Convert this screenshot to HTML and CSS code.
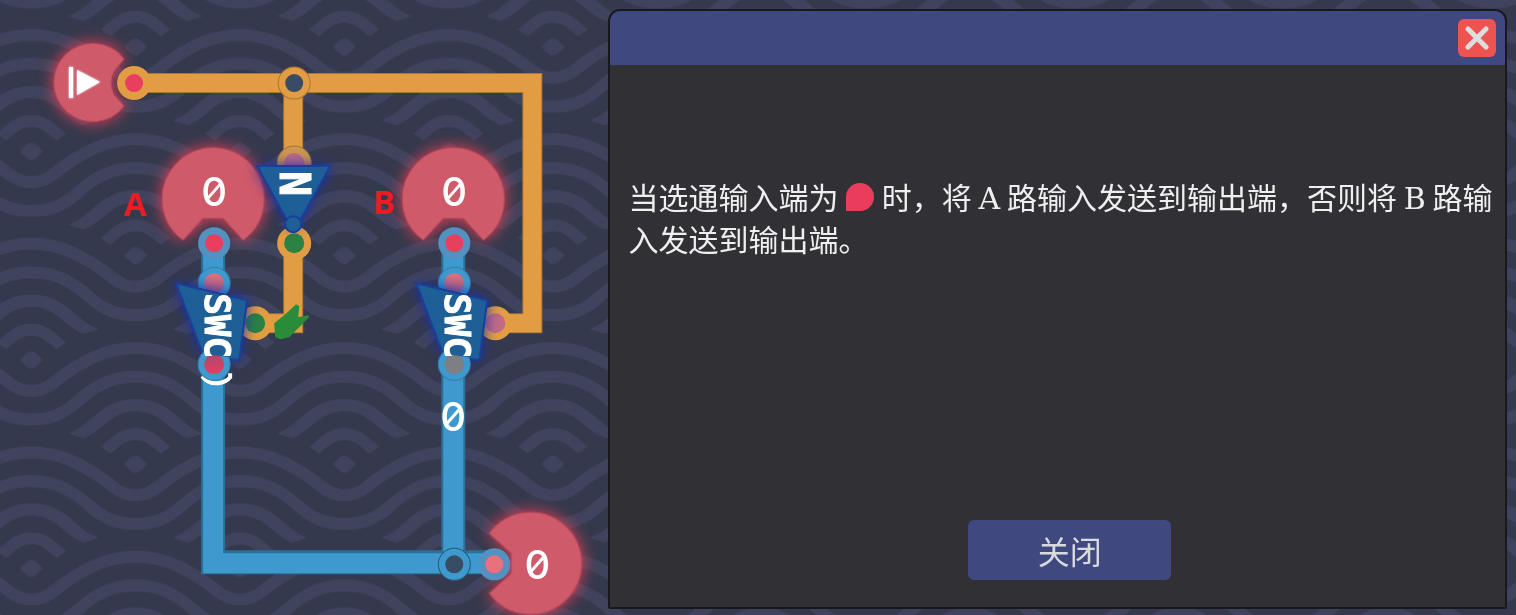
FILE: index.html
```html
<!DOCTYPE html>
<html lang="zh-CN">
<head>
<meta charset="utf-8">
<title>选通电路</title>
<link rel="stylesheet" href="styles.css">
</head>
<body>
<svg class="backdrop" aria-hidden="true">
  <defs>
    <g id="wave">
      <path class="wave-fill" d="M-34 0Q-12 -26 0 -26T34 0Q12 26 0 26T-34 0Z"/>
      <path class="wave-fill" d="M-105 -53C-70 -80 -50 -109 0 -109S70 -80 105 -53L76 -32C50 -52 35 -73 0 -73S-50 -52 -76 -32Z"/>
      <path class="wave-fill" d="M-202 -93C-135 -113 -105 -196 0 -196S135 -113 202 -93L158 -78C100 -98 75 -160 0 -160S-100 -98 -158 -78Z"/>
      <path class="wave-line" d="M-314 -134C-255 -134 -215 -152 -175 -188C-125 -233 -75 -263 0 -263S125 -233 175 -188C215 -152 255 -134 314 -134"/>
      <path class="wave-line" d="M-314 -220C-275 -220 -250 -240 -222 -264C-160 -308 -90 -349 0 -349S160 -308 222 -264C250 -240 275 -220 314 -220"/>
    </g>
    <pattern id="waves" width="626" height="626" patternUnits="userSpaceOnUse" patternTransform="scale(.3333) translate(94 -259)">
      <use href="#wave" x="313" y="400"/>
      <use href="#wave" x="0" y="87"/>
      <use href="#wave" x="626" y="87"/>
      <use href="#wave" x="0" y="713"/>
      <use href="#wave" x="626" y="713"/>
    </pattern>
  </defs>
  <rect width="100%" height="100%" fill="url(#waves)"/>
</svg>
<main class="page">
  <section class="board">
    <svg class="circuit" viewBox="0 0 606 615" role="img" aria-label="电路图">
      <defs>
        <g id="zero"><text class="digit" text-anchor="middle" y="15">0</text><path class="slash" d="M-7 8L7 -8"/></g>
        <path id="terminal" class="node" d="M-30 42A51 51 0 1 1 30 42L10 20H-10Z"/>
        <path id="gate" class="gate" d="M176 283L247 300L239 360L203 355Z"/>
        <linearGradient id="fade" x1="0" x2="0" y1="0" y2="1"><stop offset="0" stop-color="#e2737c"/><stop offset="1" stop-color="#9c5c86"/></linearGradient>
        <linearGradient id="fade-up" x1="0" x2="0" y1="1" y2="0"><stop offset="0" stop-color="#e93e5d"/><stop offset="1" stop-color="#a9486f"/></linearGradient>
      </defs>

      <path class="wire-edge" d="M134 83H532V323H495M293 83V163M293 243V323H255"/>
      <path class="wire" d="M134 83H532V323H495M293 83V163M293 243V323H255"/>
      <path class="bus-edge" d="M213 243V562H494M453 243V562"/>
      <path class="bus" d="M213 243V563H494M453 243V563"/>

      <path class="node" d="M124 59A39 39 0 1 0 124 106L114 95Q108 83 114 71Z"/>
      <path class="play" d="M69 67H73V98H69ZM77 70L100 82L77 95Z"/>
      <use href="#terminal" x="213" y="198"/>
      <use href="#terminal" x="453" y="198"/>
      <use href="#terminal" transform="translate(531 563) rotate(90)"/>
      <use href="#zero" x="214" y="191"/>
      <use href="#zero" x="454" y="191"/>
      <use href="#zero" x="537" y="564"/>
      <use href="#zero" x="453" y="416"/>

      <circle class="port" cx="134" cy="83" r="17"/><circle class="hot" cx="134" cy="83" r="9"/>
      <circle class="port rim" cx="294" cy="83" r="16"/><circle class="hub" cx="294" cy="83" r="9"/>
      <circle class="port dim rim" cx="294" cy="163" r="17"/><circle cx="294" cy="163" r="10" fill="#bd6b86"/>
      <circle class="port" cx="294" cy="243" r="17"/><circle class="off" cx="294" cy="243" r="10"/>
      <circle class="port" cx="255" cy="323" r="17"/><circle class="off" cx="255" cy="323" r="10"/>
      <circle class="port" cx="495" cy="323" r="17"/><circle cx="495" cy="323" r="10" fill="#c26b84"/>

      <circle class="bus-port" cx="214" cy="283" r="16"/><circle cx="214" cy="283" r="10" fill="url(#fade)"/>
      <circle class="bus-port" cx="454" cy="283" r="16"/><circle cx="454" cy="283" r="10" fill="url(#fade)"/>
      <circle class="bus-port soft" cx="214" cy="243" r="16"/><circle class="hot" cx="214" cy="243" r="9"/>
      <circle class="bus-port soft" cx="454" cy="243" r="16"/><circle class="hot" cx="454" cy="243" r="9"/>
      <circle class="bus-port rim-blue" cx="454" cy="564" r="16"/><circle class="hub" cx="454" cy="564" r="9"/>
      <circle class="bus-port soft" cx="494" cy="564" r="16"/><circle cx="494" cy="564" r="9" fill="#e8717b"/>

      <path class="shadow-arc" d="M202 376Q208 384 218 383Q226 382 230 377V373"/>
      <use href="#gate"/>
      <use href="#gate" x="240"/>
      <path class="gate" d="M257 166H330L298 224H289Z"/>
      <circle class="gate-dot" cx="293" cy="224" r="8"/>
      <circle class="bus-port" cx="214" cy="364" r="16"/><circle cx="214" cy="364" r="10" fill="url(#fade-up)"/>
      <circle class="bus-port" cx="454" cy="364" r="16"/><circle cx="454" cy="364" r="10" fill="#7c8084"/>
      <path class="gate-face" d="M183 287L245 302L238 358L205 354Z"/>
      <path class="gate-face" d="M423 287L485 302L478 358L445 354Z"/>
      <text class="gate-name" transform="translate(205 293) rotate(90)">SWC</text>
      <text class="gate-name" transform="translate(445 293) rotate(90)">SWC</text>
      <text class="gate-letter" transform="translate(280 171) rotate(90)">N</text>
      <path class="leaf" d="M275 337L274 323L284 315L296 304L299 306L298 317L308 315L309 317L289 337L280 339Z"/>

      <text class="mark" x="124" y="216">A</text>
      <text class="mark" x="373" y="214">B</text>
    </svg>
  </section>
  <section class="dialog" role="dialog" aria-label="说明">
    <header class="dialog-bar">
      <button class="close" type="button" aria-label="关闭窗口">
        <svg class="close-icon" viewBox="0 0 24 24" aria-hidden="true"><path d="M3 3L21 21M21 3L3 21"/></svg>
      </button>
    </header>
    <p class="message">当选通输入端为 <svg class="drop" viewBox="0 0 28 28" aria-hidden="true"><path d="M0 28V14A14 14 0 1 1 14 28Z"/></svg> 时，将 <span class="latin">A</span> 路输入发送到输出端，否则将 <span class="latin">B</span> 路输入发送到输出端。</p>
    <footer class="dialog-foot">
      <button class="action" type="button">关闭</button>
    </footer>
  </section>
</main>
</body>
</html>
```
FILE: styles.css
```css
* { box-sizing: border-box; }

body {
  margin: 0;
  background: #35394d;
  font-family: "Noto Sans CJK SC", sans-serif;
}

.backdrop {
  position: fixed;
  inset: 0;
  z-index: -1;
  width: 100%;
  height: 100%;
}
.wave-line { fill: none; stroke: #40435d; stroke-width: 36; }
.wave-fill { fill: #40435d; }

.page {
  display: grid;
  grid-template-columns: 2fr 3fr;
  min-height: 100vh;
}
.board { min-width: 0; overflow: hidden; }
.circuit { display: block; width: 100%; }

.wire, .wire-edge, .bus, .bus-edge { fill: none; }
.wire-edge { stroke: #ab7532; stroke-width: 20; }
.wire { stroke: #e29d44; stroke-width: 18; }
.bus-edge { stroke: #2a7099; stroke-width: 24; }
.bus { stroke: #3e99ce; stroke-width: 20; }
.port { fill: #e29d44; }
.dim { fill: #cf9750; }
.rim { stroke: #a87534; stroke-width: 1; }
.bus-port { fill: #3e99ce; stroke: #337fae; stroke-width: 1; }
.soft { fill: #5391c1; stroke: none; }
.rim-blue { stroke: #28587a; }
.hot { fill: #e93e5d; }
.hub { fill: #384d64; }
.off { fill: #2b8244; }
.node {
  fill: #cf5a6a;
  stroke: #b9495b;
  stroke-width: 1;
  filter: drop-shadow(0 0 8px rgba(255, 63, 85, .9));
}
.play { fill: #fff; filter: drop-shadow(0 0 1px #fff); }
.digit { fill: #fff; font: 500 40px Inter, sans-serif; }
.slash { fill: none; stroke: #fff; stroke-width: 3; }
.shadow-arc { fill: none; stroke: #fff; stroke-width: 4; }
.gate { fill: #1f5f98; stroke: #173f9b; stroke-width: 2; filter: drop-shadow(0 0 7px #1b2fa5); }
.gate-face { fill: #1f5f98; }
.gate-dot { fill: #1f5f98; stroke: #173f9b; stroke-width: 2; }
.gate-name, .gate-letter { fill: #fff; stroke: #fff; stroke-width: 1; }
.gate-name { font: bold 36px "DejaVu Sans Mono", monospace; }
.gate-letter { font: bold 42px "DejaVu Sans Mono", monospace; }
.leaf { fill: #2a8b38; }
.mark { fill: #ed1c24; font: bold 33px "Open Sans", sans-serif; }

.dialog {
  display: flex;
  flex-direction: column;
  margin: 9px 9px 6px 2px;
  overflow: hidden;
  border: 2px solid #18191d;
  border-radius: 12px 12px 2px 2px;
  background: #313035;
}
.dialog-bar {
  display: flex;
  justify-content: flex-end;
  padding: 8px 9px;
  background: #3f4980;
}
.close {
  display: grid;
  place-items: center;
  width: 38px;
  height: 38px;
  padding: 0;
  border: 0;
  border-radius: 6px;
  background: #ec5351;
}
.close-icon { width: 24px; height: 24px; fill: none; stroke: #dedede; stroke-width: 5; stroke-linecap: round; }
.message {
  flex: 1;
  margin: 0;
  padding: 110px 8px 0 18px;
  color: #efefef;
  font-size: 30px;
  line-height: 42px;
}
.latin { font-family: "DejaVu Serif", serif; line-height: 1; }
.drop { width: 28px; height: 28px; margin: 0 1px; fill: #e93d5b; vertical-align: -2px; }
.dialog-foot { display: flex; justify-content: center; padding: 0 0 27px 24px; }
.action {
  width: 203px;
  height: 60px;
  padding: 0;
  border: 0;
  border-radius: 6px;
  background: #3f4980;
  color: #d9dae0;
  font: 32px "Noto Sans CJK SC", sans-serif;
}
```
